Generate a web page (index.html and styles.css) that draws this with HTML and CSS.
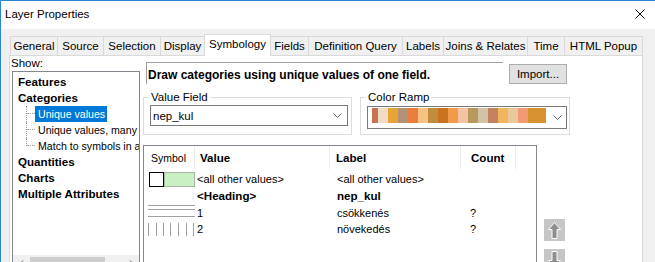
FILE: index.html
```html
<!DOCTYPE html>
<html>
<head>
<meta charset="utf-8">
<link rel="stylesheet" href="styles.css">
</head>
<body>
<div class="window">
  <div class="titlebar">
    <span class="title">Layer Properties</span>
    <svg class="close" width="10" height="10" viewBox="0 0 10 10"><path d="M0.5 0.5L9.5 9.5M9.5 0.5L0.5 9.5" stroke="#000" stroke-width="1" fill="none"/></svg>
  </div>
  <div class="frame">
    <div class="tabs">
      <div class="tab t1">General</div>
      <div class="tab t2">Source</div>
      <div class="tab t3">Selection</div>
      <div class="tab t4">Display</div>
      <div class="tab t5 active">Symbology</div>
      <div class="tab t6">Fields</div>
      <div class="tab t7">Definition Query</div>
      <div class="tab t8">Labels</div>
      <div class="tab t9">Joins &amp; Relates</div>
      <div class="tab t10">Time</div>
      <div class="tab t11">HTML Popup</div>
    </div>
    <div class="page">
      <div class="show-col">
        <div class="show-label">Show:</div>
        <div class="tree">
          <div class="node">Features</div>
          <div class="node">Categories</div>
          <div class="sub"><span class="conn"></span><span class="leaf sel">Unique values</span></div>
          <div class="sub"><span class="conn"></span><span class="leaf">Unique values, many</span></div>
          <div class="sub last"><span class="conn"></span><span class="leaf">Match to symbols in a</span></div>
          <div class="node">Quantities</div>
          <div class="node">Charts</div>
          <div class="node">Multiple Attributes</div>
          <div class="hscroll">
            <svg class="sarrow" width="7" height="7" viewBox="0 0 7 7"><path d="M5 0.5L2 3.5L5 6.5" stroke="#606060" fill="none"/></svg>
            <div class="thumb"></div>
            <svg class="sarrow right" width="7" height="7" viewBox="0 0 7 7"><path d="M2 0.5L5 3.5L2 6.5" stroke="#606060" fill="none"/></svg>
          </div>
        </div>
      </div>
      <div class="main">
        <div class="row-top">
          <div class="desc">Draw categories using unique values of one field.</div>
          <div class="btn">Import...</div>
        </div>
        <div class="row-groups">
          <fieldset class="group g-value">
            <legend>Value Field</legend>
            <div class="group-body">
              <div class="combo">
                <span class="combo-text">nep_kul</span>
                <svg class="chev" width="9" height="5" viewBox="0 0 9 5"><path d="M0.5 0.5L4.5 4.5L8.5 0.5" stroke="#606060" fill="none"/></svg>
              </div>
            </div>
          </fieldset>
          <fieldset class="group g-color">
            <legend>Color Ramp</legend>
            <div class="group-body">
              <div class="combo ramp-combo">
                <div class="ramp">
                  <span class="sw w6 c1"></span><span class="sw c2"></span><span class="sw c3"></span><span class="sw c4"></span><span class="sw c5"></span><span class="sw c6"></span><span class="sw c7"></span><span class="sw c8"></span><span class="sw c9"></span><span class="sw c10"></span><span class="sw c11"></span><span class="sw c12"></span><span class="sw c13"></span><span class="sw c14"></span><span class="sw c15"></span><span class="sw c16"></span><span class="sw w18 c17"></span>
                </div>
                <svg class="chev" width="9" height="5" viewBox="0 0 9 5"><path d="M0.5 0.5L4.5 4.5L8.5 0.5" stroke="#606060" fill="none"/></svg>
              </div>
            </div>
          </fieldset>
        </div>
        <div class="row-table">
          <div class="list">
            <div class="lrow lhead">
              <div class="hc hc-sym">Symbol</div>
              <div class="hc hc-val">Value</div>
              <div class="hc hc-lab">Label</div>
              <div class="hc hc-cnt">Count</div>
            </div>
            <div class="lrow r1">
              <div class="sym">
                <svg width="51" height="17" viewBox="0 0 51 17"><rect x="5.5" y="1.5" width="14" height="14" fill="#fff" stroke="#000"/><rect x="20.5" y="1.5" width="30" height="14" fill="#c8f0c2" stroke="#a9b8a6"/></svg>
              </div>
              <div class="val">&lt;all other values&gt;</div>
              <div class="lab">&lt;all other values&gt;</div>
              <div class="cnt"></div>
            </div>
            <div class="lrow r2">
              <div class="sym"></div>
              <div class="val b">&lt;Heading&gt;</div>
              <div class="lab b">nep_kul</div>
              <div class="cnt"></div>
            </div>
            <div class="lrow r3">
              <div class="sym">
                <svg width="51" height="16" viewBox="0 0 51 16"><path d="M4 0.5H51M4 4.5H51M4 11.5H51" stroke="#a0a0a0" fill="none"/></svg>
              </div>
              <div class="val">1</div>
              <div class="lab">csökkenés</div>
              <div class="cnt">?</div>
            </div>
            <div class="lrow r4">
              <div class="sym">
                <svg width="51" height="16" viewBox="0 0 51 16"><path d="M4.5 2V15M12.5 2V15M19.5 2V15M26.5 2V15M34.5 2V15M42.5 2V15M49.5 2V15" stroke="#a0a0a0" fill="none"/></svg>
              </div>
              <div class="val">2</div>
              <div class="lab">növekedés</div>
              <div class="cnt">?</div>
            </div>
          </div>
          <div class="movers">
            <div class="mbtn">
              <svg width="21" height="22" viewBox="0 0 21 22"><path d="M10.5 3.5L16.5 10.5H13V19.5H8V10.5H4.5Z" fill="#8e8e8e" stroke="#fff"/></svg>
            </div>
            <div class="mbtn">
              <svg width="21" height="22" viewBox="0 0 21 22"><path d="M10.5 18.5L16.5 11.5H13V2.5H8V11.5H4.5Z" fill="#8e8e8e" stroke="#fff"/></svg>
            </div>
          </div>
        </div>
      </div>
    </div>
  </div>
</div>
</body>
</html>
```

FILE: styles.css
```css
html, body {
  margin: 0;
  padding: 0;
  background: #fff;
}
body {
  font-family: "Liberation Sans", Arial, sans-serif;
  font-size: 11px;
  color: #000;
}
.window {
  width: 655px;
  height: 262px;
  box-sizing: border-box;
  overflow: hidden;
  border-top: 1px solid #2b86d6;
  border-left: 1px solid #2b86d6;
  background: #f0f0f0;
  display: flex;
  flex-direction: column;
}
.titlebar {
  flex: none;
  height: 28px;
  background: #fff;
  display: flex;
  align-items: center;
  justify-content: space-between;
  padding: 0 10px 2px 4px;
  box-sizing: border-box;
}
.title {
  font-size: 11.5px;
}
.close {
  display: block;
}
.frame {
  flex: 1;
  padding-left: 8px;
  min-height: 0;
}
.tabs {
  display: flex;
  align-items: flex-end;
  height: 26px;
  padding-left: 1px;
}
.tab {
  box-sizing: border-box;
  height: 19px;
  line-height: 18px;
  border: 1px solid #d9d9d9;
  border-bottom: none;
  margin-left: -1px;
  text-align: center;
  white-space: nowrap;
  background: #f0f0f0;
  font-size: 11.5px;
  color: #000;
}
.tab.t1 { margin-left: 0; width: 48px; }
.tab.t2 { width: 47px; }
.tab.t3 { width: 58px; }
.tab.t4 { width: 45px; }
.tab.t5 { width: 67px; }
.tab.t6 { width: 39px; }
.tab.t7 { width: 95px; }
.tab.t8 { width: 42px; }
.tab.t9 { width: 85px; }
.tab.t10 { width: 38px; }
.tab.t11 { width: 79px; }
.tab.active {
  height: 22px;
  line-height: 18px;
  background: #fff;
  position: relative;
  z-index: 1;
  margin-bottom: -1px;
}
.page {
  width: 634px;
  height: 230px;
  box-sizing: border-box;
  background: #fff;
  border: 1px solid #d9d9d9;
  display: flex;
}
.show-col {
  flex: none;
  width: 131px;
  padding-left: 1px;
  box-sizing: border-box;
}
.show-label {
  height: 15px;
  line-height: 14px;
  font-size: 11.5px;
}
.tree {
  margin-left: 1px;
  width: 128px;
  height: 202px;
  box-sizing: border-box;
  border: 1px solid #828790;
  padding-top: 2px;
  display: flex;
  flex-direction: column;
  overflow: hidden;
  white-space: nowrap;
}
.node {
  height: 16px;
  line-height: 16px;
  padding-left: 5px;
  font-weight: bold;
  font-size: 11.6px;
}
.sub {
  display: flex;
  height: 16px;
  line-height: 16px;
  padding-left: 13px;
}
.conn {
  flex: none;
  width: 8px;
  height: 16px;
  border-left: 1px dotted #a0a0a0;
}
.conn::after {
  content: "";
  display: block;
  height: 7px;
  border-bottom: 1px dotted #a0a0a0;
}
.sub.last .conn {
  height: 8px;
}
.leaf {
  padding: 0 2px 0 3px;
  font-size: 10.6px;
}
.leaf.sel {
  background: #0078d7;
  color: #fff;
}
.hscroll {
  margin-top: auto;
  height: 17px;
  flex: none;
  background: #f0f0f0;
  display: flex;
  align-items: center;
}
.sarrow {
  margin-left: 5px;
  flex: none;
}
.sarrow.right {
  margin-left: auto;
  margin-right: 4px;
}
.thumb {
  margin-left: 5px;
  width: 75px;
  height: 13px;
  background: #cdcdcd;
}
.main {
  flex: 1;
  padding-left: 2px;
}
.row-top {
  display: flex;
  margin-top: 6px;
  height: 22px;
}
.desc {
  margin-left: 3px;
  width: 357px;
  height: 22px;
  box-sizing: border-box;
  border-top: 1px solid #a0a0a0;
  border-left: 1px solid #a0a0a0;
  padding: 5px 0 0 1px;
  line-height: 14px;
  font-weight: bold;
  font-size: 12px;
  white-space: nowrap;
}
.btn {
  margin-left: 6px;
  margin-top: 2px;
  width: 58px;
  height: 20px;
  box-sizing: border-box;
  background: #e1e1e1;
  border: 1px solid #adadad;
  text-align: center;
  line-height: 18px;
  font-size: 11.5px;
}
.row-groups {
  display: flex;
  gap: 8px;
  margin-top: 6px;
}
.group {
  margin: 0;
  padding: 0;
  border: 1px solid #dcdcdc;
  min-width: 0;
  height: 45px;
  box-sizing: border-box;
}
.group legend {
  margin-left: 5px;
  padding: 0 2px;
  line-height: 14px;
  font-size: 11.5px;
}
.g-value { width: 209px; }
.g-color { width: 210px; }
.group-body {
  padding: 1px 0 0 6px;
}
.g-color .group-body {
  padding-top: 2px;
}
.combo {
  width: 198px;
  height: 21px;
  box-sizing: border-box;
  border: 1px solid #7a7a7a;
  background: #fff;
  display: flex;
  align-items: center;
  padding-left: 2px;
}
.combo-text {
  font-size: 11.5px;
}
.chev {
  margin-left: auto;
  margin-right: 5px;
  flex: none;
}
.ramp-combo {
  width: 200px;
  height: 23px;
  padding-left: 4px;
  align-items: flex-start;
}
.ramp-combo .chev {
  margin-top: 8px;
  margin-right: 4px;
}
.ramp {
  display: flex;
  margin-top: 1px;
  height: 15px;
}
.sw { width: 10px; height: 15px; }
.sw.w6 { width: 6px; }
.sw.w18 { width: 18px; }
.c1 { background: #c87450; }
.c2 { background: #f2dcc8; }
.c3 { background: #e9a437; }
.c4 { background: #b39378; }
.c5 { background: #ea7c3c; }
.c6 { background: #f7c384; }
.c7 { background: #c18d3d; }
.c8 { background: #c9731f; }
.c9 { background: #f09a4a; }
.c10 { background: #f6c2a4; }
.c11 { background: #b9985e; }
.c12 { background: #d2c3a6; }
.c13 { background: #c4825f; }
.c14 { background: #f0b65b; }
.c15 { background: #e9c99c; }
.c16 { background: #f29a74; }
.c17 { background: #d6922f; }
.row-table {
  display: flex;
  margin-top: 10px;
}
.list {
  width: 394px;
  height: 130px;
  box-sizing: border-box;
  border: 1px solid #828790;
}
.lrow {
  display: grid;
  grid-template-columns: 51px 135px 131px 55px;
  white-space: nowrap;
}
.lhead {
  height: 25px;
}
.hc {
  height: 23px;
  box-sizing: border-box;
  border-right: 1px solid #ececec;
  padding-top: 4px;
  line-height: 14px;
  font-weight: bold;
  font-size: 11.6px;
}
.hc-sym {
  padding-left: 7px;
  font-weight: normal;
  font-size: 10.5px;
}
.hc-val { padding-left: 5px; }
.hc-lab { padding-left: 6px; }
.hc-cnt { padding-left: 10px; }
.r1, .r2 { height: 17px; }
.r3, .r4 { height: 16px; }
.lrow > div {
  line-height: 16px;
}
.sym svg { display: block; }
.val { padding-left: 2px; }
.lab { padding-left: 7px; }
.cnt { padding-left: 9px; }
.b { font-weight: bold; font-size: 11.6px; }
.movers {
  margin-left: 7px;
  padding-top: 74px;
  display: flex;
  flex-direction: column;
  gap: 8px;
}
.mbtn {
  width: 21px;
  height: 22px;
  background: #c6c6c6;
}
.mbtn svg { display: block; }
```
